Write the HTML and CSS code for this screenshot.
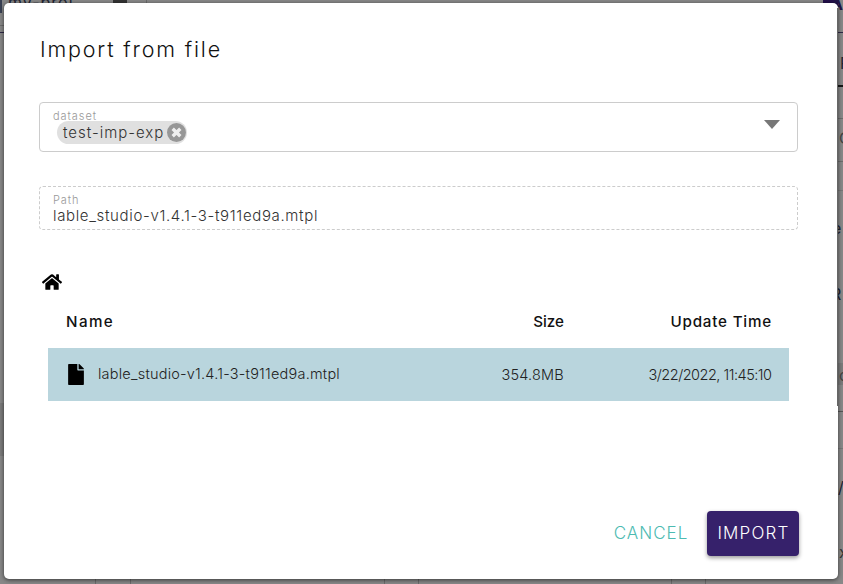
FILE: index.html
```html
<!DOCTYPE html>
<html lang="en">
<head>
<meta charset="utf-8">
<title>Import from file</title>
<link rel="stylesheet" href="styles.css">
</head>
<body>
<div class="page">
  <span class="bit project">my-proj</span><i class="caret"></i><i class="v top"></i><i class="logo"></i><span class="bit brand">A</span>
  <i class="edge"></i><i class="h l1"></i><i class="h l2"></i><i class="h r1"></i><i class="h r2"></i><i class="h r3"></i><i class="h r4"></i><i class="h r5"></i><i class="h r6"></i><i class="h r7"></i>
  <i class="band left"></i><i class="band right"></i>
  <span class="bit b1">P</span><span class="bit b2">C</span><span class="bit b3">e</span><span class="bit b4">R</span><span class="bit b5">c</span><span class="bit b6">/</span><span class="bit b7">x</span>
  <i class="v f1"></i><i class="v f2"></i><i class="v f3"></i><i class="v f4"></i><i class="v f5"></i><i class="v f6"></i>
</div>
<main class="modal">
  <h1>Import from file</h1>
  <section class="field dataset">
    <div>
      <label>dataset</label>
      <div class="chip"><span>test-imp-exp</span><svg width="19" height="19" viewBox="0 0 20 20"><circle cx="10" cy="10" r="10" fill="#979797"/><path d="M6 6l8 8M14 6l-8 8" stroke="#eee" stroke-width="3.5"/></svg></div>
    </div>
    <svg class="arrow" width="16" height="9" viewBox="0 0 16 9"><path d="M0 0h16L8 9z" fill="#777"/></svg>
  </section>
  <section class="field path">
    <label>Path</label>
    <div>lable_studio-v1.4.1-3-t911ed9a.mtpl</div>
  </section>
  <svg class="home" width="20" height="18" viewBox="0 0 576 512"><path d="M280.4 148.3L96 300.1V464a16 16 0 0 0 16 16l112-.3a16 16 0 0 0 16-16V368a16 16 0 0 1 16-16h64a16 16 0 0 1 16 16v95.6a16 16 0 0 0 16 16l112 .3a16 16 0 0 0 16-16V300L295.7 148.3a12 12 0 0 0-15.3 0zM571.6 251.5L488 182.6V44a12 12 0 0 0-12-12h-56a12 12 0 0 0-12 12v72.6L318.5 43a48 48 0 0 0-61 0L4.3 251.5a12 12 0 0 0-1.6 16.9l25.5 31a12 12 0 0 0 16.9 1.6L280.4 107.3a12 12 0 0 1 15.3 0L530.9 301a12 12 0 0 0 16.9-1.6l25.5-31a12 12 0 0 0-1.7-16.9z"/></svg>
  <section class="table">
    <div class="row head"><span class="name">Name</span><span>Size</span><span class="update">Update Time</span></div>
    <div class="row item">
      <span class="file"><svg width="16" height="21" viewBox="0 0 384 512"><path d="M224 136V0H24C10.700 0 0 10.700 0 24v464c0 13.300 10.700 24 24 24h336c13.300 0 24-10.700 24-24V160H248c-13.200 0-24-10.800-24-24zm160-14.100v6.100H256V0h6.100c6.400 0 12.500 2.500 17 7l97.900 98c4.500 4.500 7 10.600 7 16.900z"/></svg><span>lable_studio-v1.4.1-3-t911ed9a.mtpl</span></span>
      <span class="size">354.8MB</span><span class="time">3/22/2022, 11:45:10</span>
    </div>
  </section>
  <footer><button class="cancel">CANCEL</button><button class="import">IMPORT</button></footer>
  <i class="side"></i>
</main>
</body>
</html>
```
FILE: styles.css
```css
* { box-sizing: border-box; }
body { margin: 0; width: 843px; height: 584px; overflow: hidden; background: #858585; font-family: Inter, "Liberation Sans", sans-serif; color: #333; }
.page { position: absolute; inset: 0; overflow: hidden; background: #888; }
.page > * { position: absolute; }
.bit { color: #202432; font-size: 16px; line-height: 18px; }
.project { left: 8px; top: -7px; letter-spacing: 1px; }
.caret { left: 113px; top: 0; width: 14px; height: 3px; background: #333; }
.logo { left: 823px; top: 0; width: 15px; height: 8px; background: #23104a; }
.brand { left: 831px; top: -5px; color: #211646; font-weight: 700; }
.edge { left: 0; top: 0; width: 2px; height: 13px; background: #394052; }
.v { width: 1px; top: 579px; height: 5px; background: #6b6b6b; }
.v.top { left: 146px; top: 0; height: 4px; }
.f1 { left: 95px; } .f2 { left: 130px; } .f3 { left: 384px; } .f4 { left: 418px; } .f5 { left: 671px; } .f6 { left: 705px; }
.h { height: 1px; width: 6px; left: 837px; background: #6c6c6c; }
.l1, .l2 { left: 0; width: 4px; } .l1 { top: 25px; } .l2 { top: 32px; background: #2e2946; }
.r1 { top: 32px; background: #2e2946; } .r2 { top: 85px; height: 2px; background: #161616; }
.r3 { top: 118px; } .r4 { top: 161px; } .r5 { top: 190px; background: #777; } .r6 { top: 411px; background: #555; } .r7 { top: 448px; background: #777; }
.band { background: #7b7b7b; }
.left { left: 0; top: 403px; width: 4px; height: 53px; }
.right { left: 837px; top: 363px; width: 6px; height: 22px; }
.b1 { left: 840px; top: 54px; } .b2 { left: 839px; top: 129px; color: #444; } .b3 { left: 832px; top: 219px; } .b4 { left: 831px; top: 285px; } .b5 { left: 839px; top: 366px; color: #444; } .b6 { left: 838px; top: 478px; } .b7 { left: 839px; top: 543px; color: #333; }
.modal { position: relative; margin: 3px 0 0 4px; width: 834px; height: 576px; padding: 31px 39px 23px 35px; border-radius: 5px; background: #fff; box-shadow: 0 1px 4px #0009; display: flex; flex-direction: column; }
.side { position: absolute; right: 0; top: 5px; width: 1px; height: 398px; background: #666; }
h1 { margin: 0 0 37px 1px; height: 31px; font-size: 21.5px; font-weight: 300; line-height: 31px; color: #111; letter-spacing: 1.82px; }
.field { border: 1px solid #ccc; border-radius: 4px; width: 759px; padding-left: 13px; }
label { display: table; font-size: 11px; line-height: 13px; color: #999; font-weight: 300; letter-spacing: .95px; }
.dataset { height: 50px; display: flex; justify-content: space-between; padding: 7px 17px 0 13px; }
.arrow { margin-top: 10px; }
.chip { display: flex; align-items: center; justify-content: space-between; background: #e0e0e0; border-radius: 12px; width: 130px; height: 23px; padding: 0 1px 0 6px; margin-left: 4px; margin-top: -2px; font-size: 15px; font-weight: 300; letter-spacing: .98px; white-space: nowrap; }
.path { height: 44px; margin-top: 34px; border-style: dashed; padding-top: 6px; font-size: 15px; line-height: 18px; font-weight: 300; letter-spacing: .65px; }
.path label { line-height: 14px; }
.home { margin: 43px 0 0 3px; }
.table { margin: 12px 0 0 9px; width: 741px; }
.row { display: grid; grid-template-columns: 1fr 216px 208px; padding: 0 17px 0 18px; align-items: center; text-align: right; font-size: 14.5px; }
.row > :first-child { text-align: left; }
.head { height: 45px; padding-bottom: 8px; font-weight: 500; font-size: 15.2px; color: #111; }
.name { letter-spacing: 1.4px; }
.update { letter-spacing: .8px; }
.item { height: 53px; background: #b9d5dd; font-weight: 300; color: #222; }
.file { display: flex; align-items: center; gap: 14px; letter-spacing: .22px; padding: 0 0 2px 2px; }
.file svg { position: relative; top: 1px; }
.size { letter-spacing: .2px; }
.time { letter-spacing: -.5px; margin-right: .5px; }
footer { display: flex; justify-content: flex-end; margin-top: auto; gap: 8px; }
button { border: 0; background: none; height: 45px; font: 300 17px Inter, sans-serif; padding: 0 0 2px; white-space: nowrap; letter-spacing: 1px; }
.cancel { width: 98px; padding-left: 2px; color: #4dbbb2; }
.import { width: 92px; padding-left: 1px; background: #36216b; color: #fff; border-radius: 4px; box-shadow: 0 2px 4px #0006; letter-spacing: 1.2px; }
```
